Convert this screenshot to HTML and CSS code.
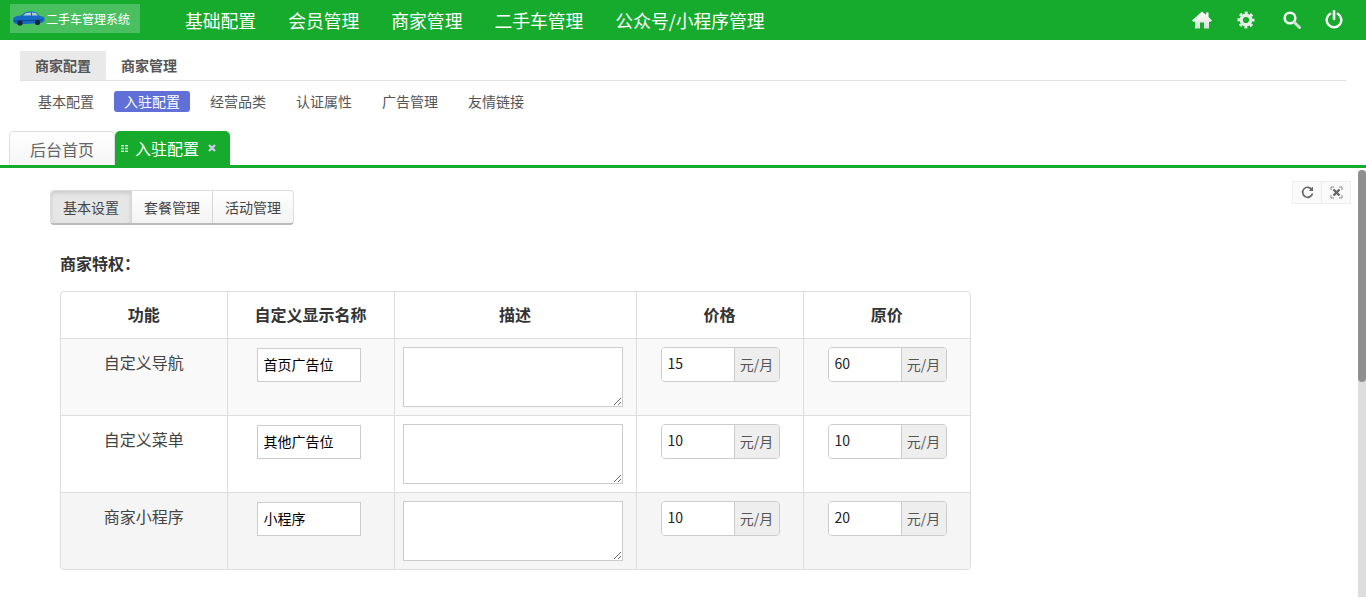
FILE: index.html
```html
<!DOCTYPE html>
<html lang="zh-CN">
<head>
<meta charset="utf-8">
<title>入驻配置</title>
<link rel="stylesheet" href="styles.css">
</head>
<body>
<header class="topbar">
  <a class="brand">
    <svg class="car" width="32" height="15" viewBox="0 0 32 15"><path d="M0.500 7 C2 5 5 5 8 4.500 L12 1.500 C15 0 22 0 24 2 L26.500 4.800 L31 6 C31.800 7 31.800 9 31 10.500 L28 12 L5 13.500 L1 12 C0 10 0 8.500 0.500 7 Z" fill="#1769c4"/><path d="M10 4.500 L13 2 L18 1.500 L18 4.500 Z M19 1.500 L23 2 L25 4.500 L19 4.500 Z" fill="#a9ccd8"/><path d="M1 9.500 L30 8.500 L30 9.500 L1 10.500 Z" fill="#0d4a8c"/><circle cx="7" cy="12" r="2.600" fill="#14263a"/><circle cx="24.500" cy="11.500" r="2.600" fill="#14263a"/></svg>
    <span>二手车管理系统</span>
  </a>
  <nav class="mainnav">
    <a>基础配置</a><a>会员管理</a><a>商家管理</a><a>二手车管理</a><a>公众号/小程序管理</a>
  </nav>
  <div class="topicons">
    <svg class="ti ti-home" width="20" height="18" viewBox="0 0 20 18"><defs><linearGradient id="ig" x1="0" y1="0" x2="0" y2="1"><stop offset="0" stop-color="#fff"/><stop offset="1" stop-color="#d5e0d8"/></linearGradient></defs><path d="M10 0.500 L14 3.900 V1.500 H16.500 V6 L20 9.500 L18.800 10.700 H17 V17.500 H12 V11.500 H8 V17.500 H3 V10.700 H1.200 L0 9.500 Z" fill="url(#ig)"/></svg>
    <svg class="ti ti-gear" width="18" height="18" viewBox="0 0 18 18"><circle cx="9" cy="9" r="4.800" fill="none" stroke="#e4ede6" stroke-width="3.400"/><circle cx="9" cy="9" r="7" fill="none" stroke="#e4ede6" stroke-width="3" stroke-dasharray="2.900 2.598" stroke-dashoffset="1.450"/></svg>
    <svg class="ti ti-search" width="18" height="18" viewBox="0 0 18 18"><circle cx="7" cy="7" r="5.300" fill="none" stroke="#f2f6f3" stroke-width="2.600"/><path d="M11 11 L16.500 16.500" stroke="#d5e0d8" stroke-width="3" stroke-linecap="round"/></svg>
    <svg class="ti ti-power" width="18" height="19" viewBox="0 0 18 19"><path d="M5.200 3.800 A7.300 7.300 0 1 0 12.800 3.800" fill="none" stroke="#fff" stroke-width="2.400" stroke-linecap="round"/><path d="M9 1 V9" stroke="#fff" stroke-width="2.600" stroke-linecap="round"/></svg>
  </div>
</header>

<section class="subnav">
  <div class="subtabs"><a class="subtab on">商家配置</a><a class="subtab">商家管理</a></div>
  <div class="pills"><a class="pill">基本配置</a><a class="pill on">入驻配置</a><a class="pill">经营品类</a><a class="pill">认证属性</a><a class="pill">广告管理</a><a class="pill">友情链接</a></div>
</section>

<div class="pagetabs">
  <a class="ptab">后台首页</a>
  <a class="ptab on"><svg class="grip" width="7" height="7" viewBox="0 0 7 7"><path d="M0 0h3v1.500H0z M4 0h3v1.500H4z M0 2.750h3v1.500H0z M4 2.750h3v1.500H4z M0 5.500h3v1.500H0z M4 5.500h3v1.500H4z" fill="#c9e8cd"/></svg><span>入驻配置</span><svg class="close" width="8" height="8" viewBox="0 0 8 8"><path d="M1 1 L7 7 M7 1 L1 7" stroke="#d0cdea" stroke-width="2.200"/></svg></a>
</div>

<main class="content">
  <div class="tools">
    <a class="tool"><svg width="13" height="13" viewBox="0 0 13 13"><path d="M11 3.800 A5 5 0 1 0 11.500 7.500" fill="none" stroke="#666" stroke-width="1.700"/><path d="M12 0.500 V5 H7.800 Z" fill="#666"/></svg></a>
    <a class="tool"><svg width="13" height="13" viewBox="0 0 13 13"><path d="M1 4 V1 H4 M9 1 H12 V4 M12 9 V12 H9 M4 12 H1 V9" fill="none" stroke="#888" stroke-width="1"/><path d="M3.500 3.500 L9.500 9.500 M9.500 3.500 L3.500 9.500" stroke="#666" stroke-width="2.400"/></svg></a>
  </div>
  <div class="btngroup"><a class="gbtn on">基本设置</a><a class="gbtn">套餐管理</a><a class="gbtn">活动管理</a></div>
  <h3 class="sectitle">商家特权：</h3>
  <div class="tablewrap">
    <table class="ptable">
      <colgroup><col class="c0"><col class="c1"><col class="c2"><col class="c1"><col class="c1"></colgroup>
      <thead><tr><th>功能</th><th>自定义显示名称</th><th>描述</th><th>价格</th><th>原价</th></tr></thead>
      <tbody>
        <tr class="odd">
          <td class="fn">自定义导航</td>
          <td class="ctr"><input class="name" type="text" value="首页广告位"></td>
          <td><textarea class="desc"></textarea></td>
          <td class="ctr"><div class="igroup"><input type="text" value="15"><span>元/月</span></div></td>
          <td class="ctr"><div class="igroup"><input type="text" value="60"><span>元/月</span></div></td>
        </tr>
        <tr>
          <td class="fn">自定义菜单</td>
          <td class="ctr"><input class="name" type="text" value="其他广告位"></td>
          <td><textarea class="desc"></textarea></td>
          <td class="ctr"><div class="igroup"><input type="text" value="10"><span>元/月</span></div></td>
          <td class="ctr"><div class="igroup"><input type="text" value="10"><span>元/月</span></div></td>
        </tr>
        <tr class="hov">
          <td class="fn">商家小程序</td>
          <td class="ctr"><input class="name" type="text" value="小程序"></td>
          <td><textarea class="desc"></textarea></td>
          <td class="ctr"><div class="igroup"><input type="text" value="10"><span>元/月</span></div></td>
          <td class="ctr"><div class="igroup"><input type="text" value="20"><span>元/月</span></div></td>
        </tr>
      </tbody>
    </table>
  </div>
</main>
<div class="scrolltrack"><div class="scrollthumb"></div></div>
</body>
</html>
```
FILE: styles.css
```css
* { box-sizing: border-box; }
html, body { margin: 0; height: 606px; overflow: hidden; background: #fff; }
body { position: relative; font-family: "Noto Sans CJK SC", "Liberation Sans", sans-serif; font-size: 14px; color: #333; }
a { display: block; }

.topbar { height: 40px; background: #17ab2e; display: flex; align-items: center; padding-left: 10px; }
.brand { width: 130px; height: 29px; margin-top: -3px; background: #4abf5f; color: #fff; font-size: 12px; display: flex; align-items: center; padding-left: 3px; gap: 1px; white-space: nowrap; }
.car { flex: none; }
.mainnav { display: flex; gap: 32px; margin-left: 45px; color: #fff; font-size: 17.800px; }
.topicons { margin-left: auto; display: flex; align-items: center; width: 176px; padding-left: 2px; height: 40px; }
.ti { flex: none; }
.ti-gear { margin-left: 25px; }
.ti-search { margin-left: 28px; }
.ti-power { margin-left: 24px; margin-top: -2px; }

.subnav { padding: 11px 20px 0; height: 91px; }
.subtabs { display: flex; height: 30px; border-bottom: 1px solid #e1e1e1; }
.subtab { width: 86px; text-align: center; font-weight: 700; color: #555; font-size: 14px; line-height: 29px; }
.subtab.on { background: #e9e9e9; }
.pills { display: flex; gap: 10px; margin: 10px 0 0 8px; }
.pill { width: 76px; height: 21px; line-height: 21px; text-align: center; color: #555; font-size: 14px; border-radius: 3px; }
.pill.on { background: #6170d6; color: #fff; }

.pagetabs { height: 37px; padding-left: 9px; display: flex; align-items: flex-end; border-bottom: 3px solid #17ab2e; }
.ptab { height: 34px; display: flex; align-items: center; }
.ptab:first-child { width: 106px; justify-content: center; font-size: 16px; color: #666; background: linear-gradient(#fff, #f4f5f4); border: 1px solid #ddd; border-bottom: 0; border-radius: 5px 5px 0 0; }
.ptab.on { width: 115px; background: #17ab2e; color: #fff; font-size: 16px; padding-left: 6px; border-radius: 5px 5px 0 0; }
.grip { margin-right: 7px; }
.close { margin-left: 9px; }

.content { position: relative; padding: 22px 0 0 50px; }
.tools { position: absolute; top: 13px; left: 1292px; display: flex; }
.tool { width: 30px; height: 23px; display: flex; align-items: center; justify-content: center; background: #fafafa; border: 1px solid #eee; }
.tool + .tool { margin-left: -1px; }

.btngroup { display: inline-flex; height: 35px; border: 1px solid #ddd; border-bottom: 2px solid #bbb; border-radius: 4px; background: linear-gradient(#fff, #f3f3f3); }
.gbtn { line-height: 33px; color: #444; font-size: 14px; border-left: 1px solid #d5d5d5; width: 81px; text-align: center; }
.gbtn:first-child { border-left: 0; width: 80px; }
.gbtn.on { background: #e6e6e6; box-shadow: inset 0 2px 4px rgba(0,0,0,.12); border-radius: 4px 0 0 4px; }

.sectitle { margin: 27px 0 0 10px; font-size: 16px; font-weight: 700; line-height: 22px; color: #333; }
.tablewrap { width: 911px; margin: 17px 0 0 10px; border: 1px solid #ddd; border-radius: 4px; overflow: hidden; }
.ptable { width: 909px; border-collapse: collapse; table-layout: fixed; }
.c0 { width: 166px; }
.c1 { width: 167px; }
.c2 { width: 242px; }
.ptable th { height: 46px; padding: 0 0 2px; font-size: 16px; font-weight: 700; color: #333; text-align: center; border-left: 1px solid #ddd; border-bottom: 1px solid #ddd; }
.ptable td { height: 77px; padding: 8px; vertical-align: top; border-left: 1px solid #ddd; border-top: 1px solid #ddd; }
.ptable th:first-child, .ptable td:first-child { border-left: 0; }
.ptable thead + tbody tr:first-child td { border-top: 0; }
.odd td { background: #f9f9f9; }
.hov td { background: #f5f5f5; }
td.fn { text-align: center; font-size: 16px; line-height: 30px; color: #444; }
td.ctr { text-align: center; }
.name { display: block; width: 104px; height: 34px; margin: 1px 0 0 21px; padding: 0 6px 2px; border: 1px solid #ccc; font: 14px "Noto Sans CJK SC", sans-serif; color: #000; background: #fff; outline: 0; }
.desc { display: block; width: 220px; height: 60px; border: 1px solid #ccc; background: #fff; margin: 0; outline: 0; }
.igroup { display: flex; width: 119px; height: 35px; margin-left: 16px; border: 1px solid #ccc; border-radius: 4px; overflow: hidden; background: #fff; }
.igroup input { width: 72px; border: 0; padding: 0 6px 2px; font: 14px "Noto Sans CJK SC", sans-serif; color: #222; outline: 0; background: #fff; }
.igroup span { flex: 1; background: #eee; border-left: 1px solid #ccc; font-size: 14px; line-height: 33px; text-align: center; color: #555; }

.scrolltrack { position: absolute; left: 1358px; top: 170px; width: 8px; height: 427px; background: #ddd; border-radius: 4px 4px 0 0; }
.scrollthumb { height: 212px; background: #8f8f8f; border-radius: 4px; }
```
